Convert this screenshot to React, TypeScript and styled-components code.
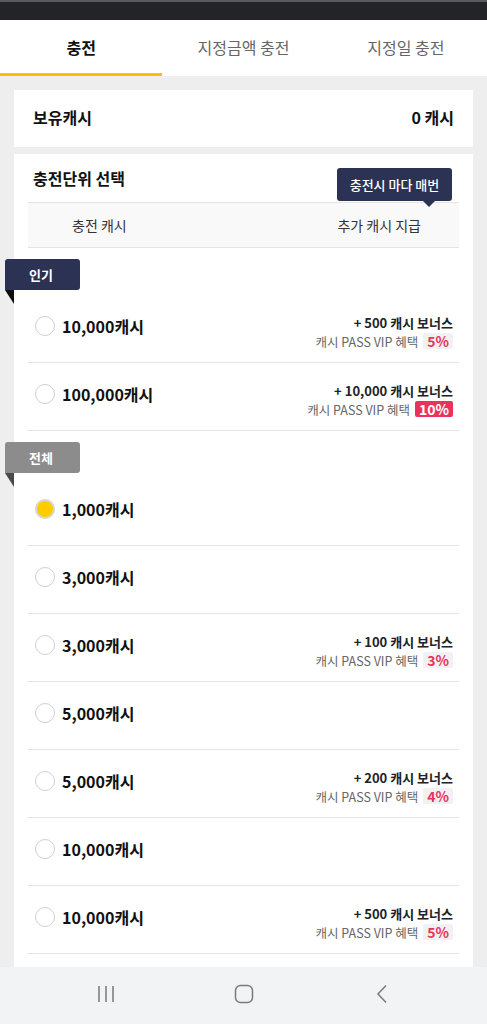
import * as React from 'react'
import styled, { createGlobalStyle, css } from 'styled-components'

const GlobalStyle = createGlobalStyle`
  html, body {
    margin: 0;
    padding: 0;
    background: #eeeeee;
  }
  body {
    font-family: "Noto Sans CJK KR", "Noto Sans", sans-serif;
    color: #222;
  }
  * { box-sizing: border-box; }
`

const NAVY = '#2b3253'
const RED = '#e8335d'

const Page = styled.div`
  height: 1024px;
  display: flex;
  flex-direction: column;
  overflow: hidden;
`

const StatusBar = styled.div`
  height: 20px;
  flex: none;
  background: #232427;
  border-top: 2px solid #5a5b5e;
`

const Tabs = styled.nav`
  flex: none;
  display: grid;
  grid-template-columns: repeat(3, 1fr);
  background: #fff;
`

const Tab = styled.div<{ $active?: boolean }>`
  height: 56px;
  display: flex;
  align-items: center;
  justify-content: center;
  font-size: 16px;
  color: #666;
  border-bottom: 3px solid transparent;

  ${({ $active }) => $active && css`
    color: #111;
    font-weight: 700;
    border-bottom-color: #f5c300;
  `}
`

const Content = styled.main`
  flex: 1;
  min-height: 0;
  overflow: hidden;
  padding: 14px 14px 0;
  display: flex;
  flex-direction: column;
  gap: 7px;
`

const BalanceCard = styled.section`
  flex: none;
  height: 57px;
  background: #fff;
  display: flex;
  align-items: center;
  justify-content: space-between;
  padding: 0 19px 3px;
  font-size: 16px;
  font-weight: 700;
  color: #111;
`

const UnitCard = styled.section`
  flex: none;
  background: #fff;
  padding: 0 14px 20px;
`

const TitleRow = styled.div`
  position: relative;
  height: 48px;
  display: flex;
  align-items: center;
  padding: 0 5px;
  font-size: 16px;
  font-weight: 700;
  color: #111;
`

const Tooltip = styled.div`
  position: absolute;
  top: 14px;
  right: 7px;
  width: 115px;
  height: 33px;
  border-radius: 3px;
  background: ${NAVY};
  color: #fff;
  font-size: 13px;
  font-weight: 500;
  display: flex;
  align-items: center;
  justify-content: center;

  &::after {
    content: '';
    position: absolute;
    top: 100%;
    right: 17px;
    border: 6px solid transparent;
    border-top-color: ${NAVY};
    border-bottom: 0;
  }
`

const HeaderRow = styled.div`
  height: 46px;
  display: flex;
  align-items: center;
  justify-content: space-between;
  padding: 0 38px 0 44px;
  background: #f9f9f9;
  border-top: 1px solid #e3e3e3;
  border-bottom: 1px solid #e3e3e3;
  font-size: 14px;
  color: #333;
`

const GroupLabel = styled.div<{ $tone: 'navy' | 'gray' }>`
  position: relative;
  width: 75px;
  height: 31px;
  margin: 11px 0 5px -23px;
  padding-left: 24px;
  display: flex;
  align-items: center;
  border-radius: 3px 3px 3px 0;
  font-size: 13px;
  font-weight: 700;
  color: #fff;
  background: ${({ $tone }) => ($tone === 'navy' ? NAVY : '#8c8c8c')};

  &::after {
    content: '';
    position: absolute;
    left: 0;
    top: 100%;
    width: 9px;
    height: 14px;
    clip-path: polygon(0 0, 100% 0, 100% 100%);
    background: ${({ $tone }) => ($tone === 'navy' ? '#0d0d0d' : '#4a4a4a')};
  }
`

const Row = styled.label`
  height: 68px;
  display: flex;
  align-items: center;
  justify-content: space-between;
  padding: 0 6px 5px 7px;
  border-bottom: 1px solid #e3e3e3;
`

const Left = styled.div`
  display: flex;
  align-items: center;
  gap: 7px;
`

const Radio = styled.span<{ $checked?: boolean }>`
  width: 20px;
  height: 20px;
  border-radius: 50%;
  border: 1.5px solid #cfcfcf;
  background: #fff;

  ${({ $checked }) => $checked && css`
    border: 2px solid #d6d6d6;
    background: #ffcc00;
  `}
`

const Amount = styled.span`
  font-size: 16px;
  font-weight: 700;
  color: #111;
`

const Bonus = styled.div`
  display: flex;
  flex-direction: column;
  align-items: flex-end;
  margin-top: 11px;
`

const BonusLine = styled.div`
  font-size: 13px;
  font-weight: 700;
  line-height: 19px;
  color: #222;
`

const VipLine = styled.div`
  display: flex;
  align-items: center;
  gap: 5px;
  font-size: 12.5px;
  line-height: 19px;
  color: #666;
`

const Rate = styled.span<{ $hot?: boolean }>`
  height: 16px;
  padding: 0 4px;
  display: flex;
  align-items: center;
  border-radius: 2px;
  font-size: 14px;
  font-weight: 700;
  background: ${({ $hot }) => ($hot ? RED : '#f1f1f1')};
  color: ${({ $hot }) => ($hot ? '#fff' : RED)};
`

const NavBar = styled.footer`
  flex: none;
  height: 57px;
  background: #f2f3f5;
  display: flex;
  align-items: center;
  justify-content: center;
  gap: 118px;
  padding-bottom: 4px;
`

const NavIcon = styled.svg`
  width: 20px;
  height: 20px;
  stroke: #7a7a7a;
  stroke-width: 1.5;
  fill: none;
`

type Item = { amount: string; bonus?: string; rate?: string; hot?: boolean; checked?: boolean }

const popular: Item[] = [
  { amount: '10,000', bonus: '500', rate: '5%' },
  { amount: '100,000', bonus: '10,000', rate: '10%', hot: true },
]

const all: Item[] = [
  { amount: '1,000', checked: true },
  { amount: '3,000' },
  { amount: '3,000', bonus: '100', rate: '3%' },
  { amount: '5,000' },
  { amount: '5,000', bonus: '200', rate: '4%' },
  { amount: '10,000' },
  { amount: '10,000', bonus: '500', rate: '5%' },
]

function CashRow({ amount, bonus, rate, hot, checked }: Item) {
  return (
    <Row>
      <Left>
        <Radio $checked={checked} />
        <Amount>{amount}캐시</Amount>
      </Left>

      {bonus && (
        <Bonus>
          <BonusLine>+ {bonus} 캐시 보너스</BonusLine>
          <VipLine>
            캐시 PASS VIP 혜택
            <Rate $hot={hot}>{rate}</Rate>
          </VipLine>
        </Bonus>
      )}
    </Row>
  )
}

export default function App() {
  return (
    <>
      <GlobalStyle />

      <Page>
        <StatusBar />

        <Tabs>
          <Tab $active>충전</Tab>
          <Tab>지정금액 충전</Tab>
          <Tab>지정일 충전</Tab>
        </Tabs>

        <Content>
          <BalanceCard>
            <span>보유캐시</span>
            <span>0 캐시</span>
          </BalanceCard>

          <UnitCard>
            <TitleRow>
              충전단위 선택
              <Tooltip>충전시 마다 매번</Tooltip>
            </TitleRow>

            <HeaderRow>
              <span>충전 캐시</span>
              <span>추가 캐시 지급</span>
            </HeaderRow>

            <GroupLabel $tone="navy">인기</GroupLabel>
            {popular.map((item, i) => <CashRow key={i} {...item} />)}

            <GroupLabel $tone="gray">전체</GroupLabel>
            {all.map((item, i) => <CashRow key={i} {...item} />)}
          </UnitCard>
        </Content>

        <NavBar>
          <NavIcon viewBox="0 0 20 20">
            <path d="M3 2v16M10 2v16M17 2v16" />
          </NavIcon>
          <NavIcon viewBox="0 0 20 20">
            <rect x="1.5" y="1.5" width="17" height="17" rx="5" />
          </NavIcon>
          <NavIcon viewBox="0 0 20 20">
            <path d="M14 1.5L6 10l8 8.5" />
          </NavIcon>
        </NavBar>
      </Page>
    </>
  )
}
